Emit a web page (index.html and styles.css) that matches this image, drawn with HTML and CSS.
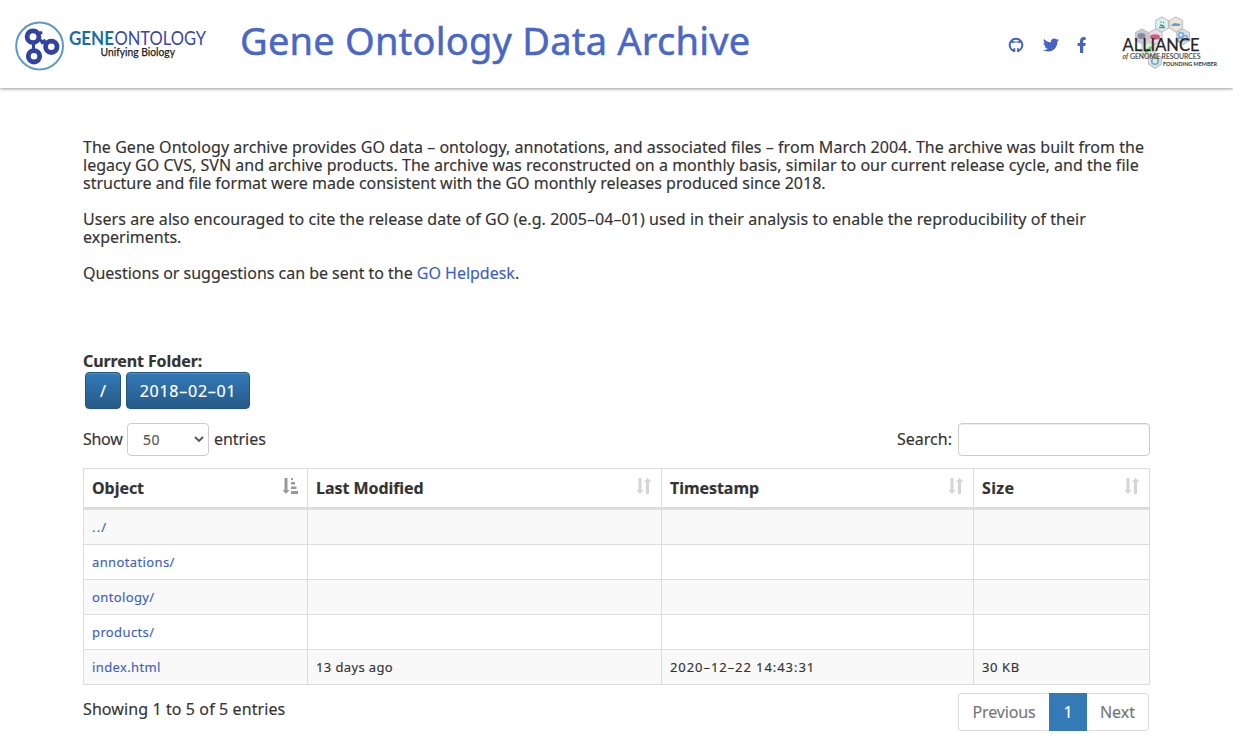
FILE: index.html
```html
<!DOCTYPE html>
<html lang="en">
<head>
<meta charset="utf-8">
<title>Gene Ontology Data Archive</title>
<link rel="stylesheet" href="styles.css">
</head>
<body>
<header class="top">
  <svg class="logo" width="200" height="60" viewBox="10 16 200 60">
    <circle cx="39.6" cy="46" r="23.4" fill="#fff" stroke="#6099c5" stroke-width="2"/>
    <g fill="none" stroke="#3142a0">
      <g stroke-width="4.8"><circle cx="33" cy="36.7" r="5.9"/><circle cx="51.300" cy="46.8" r="5.7"/><circle cx="34" cy="56.3" r="5.7"/></g>
      <path d="M33.5 43v7M38 33.500l4.300-1M39 39.500l7 4M41 43.500l4.500-3.500" stroke-width="3"/>
    </g>
    <text x="69" y="45" class="word gene" textLength="45" lengthAdjust="spacingAndGlyphs">GENE</text>
    <text x="114.5" y="45" class="word onto" textLength="91.5" lengthAdjust="spacingAndGlyphs">ONTOLOGY</text>
    <text x="100.5" y="55.5" class="tag" textLength="74.5" lengthAdjust="spacingAndGlyphs">Unifying Biology</text>
  </svg>
  <h1>Gene Ontology Data Archive</h1>
  <nav class="social">
    <a><svg width="16" height="16" viewBox="0 0 16 16"><path fill="none" stroke="currentColor" stroke-width="2" d="M6 14.100A6.300 6.300 0 1 1 10 14.100"/><path fill="currentColor" d="M3.800 3.300l2.200 1.100h4l2.200-1.100.3 2.700h-2L9.500 5.600h-3L5.500 6h-2zM5 14.900v-1.500c-1.300.2-1.800-.5-2.300-1.300 1.100-.2 1.600.6 2.500.3.200-.8.400-1.100.8-1.500l1.300.600v3.400zM11 14.900v-3c0-.5-.3-.8-.6-1.100l-1.300.700v3.400z"/></svg></a>
    <a><svg width="16" height="16" viewBox="0 0 512 512"><path fill="currentColor" d="M459 152c.3 4.500.3 9 .3 13.600C459.300 304 354 464 161 464 102 464 47 447 0 417c8 1 16 1.300 25 1.300 49 0 94-16.600 130-45-46-1-85-31-98-73 6.500 1 13 1.600 20 1.600 9.400 0 19-1.300 28-3.600C57 289 21 247 21 196v-1.300c14 8 30 13 47 13.600C40 189 21 157 21 120c0-19 5-37 14-53 52 64 130 105 217 110-1.600-8-2.600-16-2.600-24 0-58 47-105 105-105 30 0 58 13 77 33 24-4.500 46-13 67-25-8 24-24 45-46 58 21-2.300 42-8 60-16-14 21-32 39-53 54z"/></svg></a>
    <a><svg width="16" height="16" viewBox="0 0 16 16"><path fill="currentColor" d="M4 16V8.900H1.600V6H4V4C4 1.400 5.500.1 7.700.1l2 .1v2.700H8.300C7.300 2.900 7.200 3.500 7.200 4.300V6h2.500l-.4 2.900H7.200V16z"/></svg></a>
  </nav>
  <svg class="alliance" width="104" height="60" viewBox="1118 12 104 60">
    <g stroke="#c2c4c5" stroke-width="1.200">
      <path fill="#d8f2ef" d="M1162 17l6.500 3.500v7.500l-6.500 4-6.500-4v-7.500z"/>
      <path fill="#eee6da" d="M1176 17l6.500 3.500v7.500l-6.500 4-6.500-4v-7.500z"/>
      <path fill="#cbc7d5" d="M1142 29l6.500 3.500v7.500l-6.500 4-6.500-4v-7.500z"/>
      <path fill="#ead9ef" d="M1155.500 29l6.500 3.500v8l-6.500 4-6.500-4v-8z"/>
      <path fill="#d4e0f1" d="M1183 29l6.500 3.500v8l-6.500 4-6.500-4v-8z"/>
      <path fill="#d8f0d4" d="M1148.500 42l6.500 3.500v8l-6.500 4-6.500-4v-8z"/>
      <path fill="#d7e7ed" d="M1155 54l6.500 3v7l-6.500 4.500-6.500-4.500v-7z"/>
    </g>
    <path d="M1159 27.500h6M1160.500 22h1M1163 22.500h1M1160 25l4 1" stroke="#608984" stroke-width="1.600"/>
    <path d="M1171 26q2-4 6-2.500l4 .5-2 2z" fill="#659fc4"/>
    <ellipse cx="1141.500" cy="36" rx="4" ry="3" fill="#898aa2"/><ellipse cx="1155" cy="37" rx="5" ry="2.700" fill="#c95e7c"/>
    <g fill="none" stroke="#80a6cf" stroke-width="1.400"><circle cx="1181" cy="35" r="2.500"/><circle cx="1185" cy="38" r="2.500"/><circle cx="1180" cy="40" r="2"/></g>
    <path d="M1145 52l7-5" stroke="#86be78" stroke-width="3"/><circle cx="1155" cy="61" r="3.300" fill="none" stroke="#72a7c2" stroke-width="1.600"/>
    <text x="1122.500" y="50.500" class="all" textLength="77" lengthAdjust="spacingAndGlyphs">ALLIANCE</text>
    <text x="1122.500" y="58.500" class="genome" textLength="78" lengthAdjust="spacingAndGlyphs"><tspan font-style="italic">of</tspan> GENOME RESOURCES</text>
    <text x="1163" y="66" class="member" textLength="54" lengthAdjust="spacingAndGlyphs">FOUNDING MEMBER</text>
  </svg>
</header>
<main>
  <section class="intro">
    <p><span class="l1">The Gene Ontology archive provides GO data – ontology, annotations, and associated files – from March 2004. The archive was built from the</span><br>
    <span class="l2">legacy GO CVS, SVN and archive products. The archive was reconstructed on a monthly basis, similar to our current release cycle, and the file</span><br>
    <span class="l3">structure and file format were made consistent with the GO monthly releases produced since 2018.</span></p>
    <p><span class="l4">Users are also encouraged to cite the release date of GO (e.g. 2005–04–01) used in their analysis to enable the reproducibility of their</span><br>
    <span class="l5">experiments.</span></p>
    <p><span class="l6">Questions or suggestions can be sent to the <a>GO Helpdesk</a>.</span></p>
  </section>
  <div class="folder">Current Folder:</div>
  <div class="crumbs"><button class="root">/</button><button class="date">2018–02–01</button></div>
  <div class="controls">
    <label class="length"><span class="word-show">Show</span><span class="select">50<svg width="10" height="7" viewBox="0 0 10 7"><path d="M1 1l4 4 4-4" fill="none" stroke="#555" stroke-width="1.900"/></svg></span><span class="word-entries">entries</span></label>
    <label class="search"><span class="word-search">Search:</span><input type="text"></label>
  </div>
  <table>
    <colgroup><col class="c1"><col class="c2"><col class="c3"><col class="c4"></colgroup>
    <thead><tr>
      <th><div>Object<svg class="asc" width="16" height="16" viewBox="0 0 16 16"><path d="M2.500 0h3v12h2L4 16 .5 12h2zM9 0h2v2H9zM9 4h4v2.500H9zM9 8.500h5.500V11H9zM9 13h7v3H9z"/></svg></div></th>
      <th><div>Last Modified<svg width="16" height="16" viewBox="0 0 16 16"><path d="M2.500 0h3v12h2L4 16 .5 12h2zM10 16h3V4h2.500L11.500 0 8 4h2z"/></svg></div></th>
      <th><div>Timestamp<svg width="16" height="16" viewBox="0 0 16 16"><path d="M2.500 0h3v12h2L4 16 .5 12h2zM10 16h3V4h2.500L11.500 0 8 4h2z"/></svg></div></th>
      <th class="short"><div>Size<svg width="16" height="16" viewBox="0 0 16 16"><path d="M2.500 0h3v12h2L4 16 .5 12h2zM10 16h3V4h2.500L11.500 0 8 4h2z"/></svg></div></th>
    </tr></thead>
    <tbody>
      <tr><td><a class="up">../</a></td><td></td><td></td><td></td></tr>
      <tr><td><a>annotations/</a></td><td></td><td></td><td></td></tr>
      <tr><td><a>ontology/</a></td><td></td><td></td><td></td></tr>
      <tr><td><a>products/</a></td><td></td><td></td><td></td></tr>
      <tr><td><a>index.html</a></td><td>13 days ago</td><td class="stamp">2020–12–22 14:43:31</td><td class="size">30 KB</td></tr>
    </tbody>
  </table>
  <footer>
    <div class="info">Showing 1 to 5 of 5 entries</div>
    <div class="pages"><a class="prev">Previous</a><a class="cur">1</a><a class="next">Next</a></div>
  </footer>
</main>
</body>
</html>
```
FILE: styles.css
```css
* { box-sizing: border-box; }
body { margin: 0; height: 737px; overflow: hidden; background: #fff; color: #333; font: 16px/18px "Noto Sans", sans-serif; -webkit-text-stroke: .15px currentColor; }
svg { -webkit-text-stroke: 0; }
a { color: #3f5fc4; }
.top { height: 88px; display: flex; align-items: flex-start; box-shadow: 0 1px 3px rgba(0,0,0,.4); }
.logo { margin: 16px 0 0 10px; flex: none; }
.word { font: 18.500px Lato, sans-serif; }
.gene { font-weight: 700; fill: #176fa6; }
.onto { fill: #3b489f; }
.tag { font: 10.500px Lato, sans-serif; fill: #222; stroke: #222; stroke-width: .25px; }
h1 { margin: 14px 0 0 30px; width: 540px; white-space: nowrap; font: 400 38px/53px "Noto Sans", sans-serif; letter-spacing: .22px; color: #4967c3; -webkit-text-stroke: .5px #4967c3; }
.social { display: flex; width: 110px; margin: 37px 0 0 228px; gap: 18px; }
.social a { display: block; height: 16px; width: 16px; color: #4665c2; }
.social a:nth-child(2) { margin-left: 1px; margin-right: -1px; }
.social svg { display: block; }
.alliance { margin: 12px 0 0 0; flex: none; }
.all { font: 17px Lato, sans-serif; fill: #252525; stroke: #252525; stroke-width: .25px; }
.genome { font: 7.200px Lato, sans-serif; fill: #444; stroke: #444; stroke-width: .15px; }
.member { font: 700 5.500px Lato, sans-serif; fill: #333; }
main { width: 1067px; margin-left: 83px; }
.intro { padding-top: 50px; white-space: nowrap; height: 264px; }
.intro p { margin: 0 0 18px; }
.l1 { letter-spacing: .044px; }
.l2 { letter-spacing: .02px; }
.l3 { letter-spacing: -.01px; }
.l4 { letter-spacing: .058px; }
.l5 { letter-spacing: 0; }
.l6 { letter-spacing: -.02px; }
.folder { font-weight: 700; letter-spacing: -.1px; }
.crumbs { display: flex; gap: 5px; padding: 2px 0 0 2px; }
.crumbs button { height: 37px; border: 1px solid #245580; border-radius: 4px; padding: 0; color: #fff; background: linear-gradient(#337ab7, #265a88); box-shadow: inset 0 1px rgba(255,255,255,.15), 0 1px 1px rgba(0,0,0,.07); font: 16px "Noto Sans", sans-serif; -webkit-text-stroke: .2px #fff; }
.root { width: 36px; }
.date { width: 124px; letter-spacing: .75px; }
.controls { display: flex; justify-content: space-between; margin-top: 14px; height: 45px; }
label { display: flex; height: 33px; align-items: center; }
label > span:not(.select) { position: relative; top: -1px; }
.word-show { width: 44px; letter-spacing: -.3px; }
.word-search { width: 61px; letter-spacing: 0; }
.word-entries { letter-spacing: -.05px; }
.select { display: flex; justify-content: space-between; align-items: center; width: 82px; height: 33px; margin: 0 5px 0 0; padding: 0 4px 0 15px; border: 1px solid #ccc; border-radius: 4px; color: #555; font-size: 14px; letter-spacing: .4px; }
.search input { width: 192px; height: 33px; border: 1px solid #ccc; border-radius: 4px; box-shadow: inset 0 1px 1px rgba(0,0,0,.075); }
table { width: 1067px; table-layout: fixed; border-collapse: separate; border-spacing: 0; border: solid #ddd; border-width: 1px 0 0 1px; }
.c1 { width: 224px; } .c2 { width: 354px; } .c3 { width: 312px; } .c4 { width: 176px; }
th, td { border: solid #ddd; border-width: 0 1px 1px 0; padding: 0 8px; text-align: left; }
th { height: 41px; border-bottom-width: 3px; letter-spacing: -.05px; }
th.short { letter-spacing: .35px; }
th div { display: flex; justify-content: space-between; align-items: center; height: 38px; }
th svg { margin: -5px 1px 0 0; fill: #d5d5d5; }
th .asc { fill: #999; }
td { height: 35px; font-size: 13px; letter-spacing: .38px; }
.up { letter-spacing: 1.200px; }
.stamp { letter-spacing: .93px; }
.size { letter-spacing: .6px; }
tbody tr:nth-child(odd) { background: #f9f9f9; }
footer { display: flex; justify-content: space-between; padding: 8px 1px 0 0; }
.info { padding-top: 7px; letter-spacing: .1px; }
.pages { display: flex; height: 38px; text-align: center; line-height: 37px; }
.pages a { border: 1px solid #ddd; color: #777; }
.pages .prev { width: 91px; border-right: 0; border-radius: 4px 0 0 4px; letter-spacing: -.15px; }
.pages .cur { width: 38px; background: #337ab7; border-color: #337ab7; color: #fff; }
.pages .next { width: 62px; border-left: 0; border-radius: 0 4px 4px 0; }
```
